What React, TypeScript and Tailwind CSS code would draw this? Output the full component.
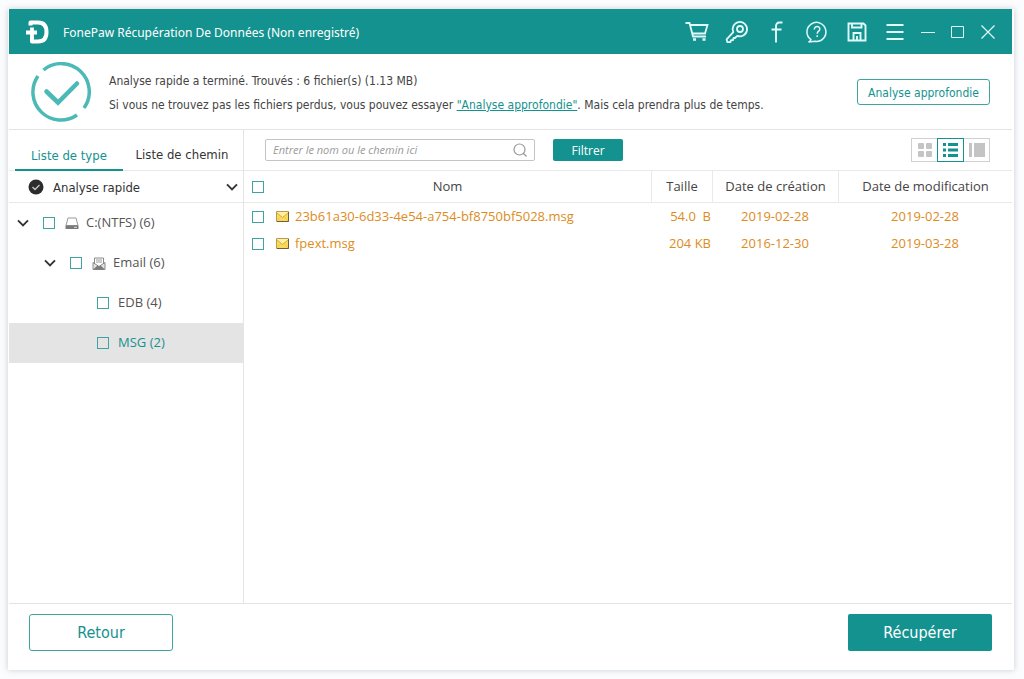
import type { ReactNode } from "react"

const TitleButton = ({
  label,
  className = "w-10",
  children,
}: {
  label: string
  className?: string
  children: ReactNode
}) => (
  <button
    type="button"
    aria-label={label}
    className={`flex h-10 items-center justify-center text-[#dffbfa] ${className}`}
  >
    {children}
  </button>
)

const Checkbox = ({ label }: { label: string }) => (
  <input
    type="checkbox"
    aria-label={label}
    className="block size-3 shrink-0 appearance-none border border-[#3fa3a0] checked:bg-[#149290]"
  />
)

const Chevron = ({ className = "" }: { className?: string }) => (
  <svg
    viewBox="0 0 12 8"
    className={`h-2 w-3 shrink-0 ${className}`}
    fill="none"
    stroke="#333"
    strokeWidth="1.9"
  >
    <path d="M1 1.3 6 6.3 11 1.3" />
  </svg>
)

const DriveIcon = () => (
  <svg viewBox="0 0 14 13" className="h-[13px] w-3.5 shrink-0">
    <path d="M3 1h8l2 7.500H1z" fill="#fff" stroke="#999" />
    <path d="M.5 8.500h13v3.500H.5z" fill="#7a7a7a" />
    <path d="M9 10.300h3" stroke="#ddd" />
  </svg>
)

const MailIcon = () => (
  <svg viewBox="0 0 14 13" className="h-[13px] w-3.5 shrink-0" fill="none">
    <path d="M2.500 6V1h9v5" stroke="#8a8a8a" />
    <path d="M4 3h6M4 5h6" stroke="#9a9a9a" />
    <path d="M1 5.500v7h12v-7L7 9.500z" fill="#e2e2e2" stroke="#888" />
    <path d="m1 12.500 4.500-4 1.500 1 1.500-1 4.500 4z" fill="#7a7a7a" />
  </svg>
)

const EnvelopeIcon = () => (
  <svg viewBox="0 0 13 11" className="h-[11px] w-[13px] shrink-0">
    <path d="M.5.5h12v10H.5z" fill="#fbd95b" stroke="#b89c55" />
    <path d="m1 10 4-4.500M12 10 8 5.500" stroke="#f0c95a" />
    <path d="m1 2 5.500 4.500L12 2V1H1z" fill="#fff0a8" />
    <path d="m1 2 5.500 4.500L12 2" fill="none" stroke="#d9a92e" />
    <path d="M12.500 1v9.500H1" fill="none" stroke="#6e5f3c" />
  </svg>
)

const tree = [
  { name: "C:(NTFS) (6)", indent: "pl-2", open: true, icon: <DriveIcon /> },
  { name: "Email (6)", indent: "pl-[35px]", open: true, icon: <MailIcon /> },
  { name: "EDB (4)", indent: "pl-[88px]" },
  { name: "MSG (2)", indent: "pl-[88px]", selected: true },
]

const files = [
  {
    name: "23b61a30-6d33-4e54-a754-bf8750bf5028.msg",
    size: "54.0\u00a0\u00a0B",
    created: "2019-02-28",
    modified: "2019-02-28",
  },
  {
    name: "fpext.msg",
    size: "204 KB",
    created: "2016-12-30",
    modified: "2019-03-28",
  },
]

const TitleBar = () => (
  <header className="flex h-[45px] items-center bg-[#149290] pr-[9px] pl-4 text-white">
    <svg viewBox="0 0 24 24" className="size-6 shrink-0" fill="none" stroke="#fff">
      <path
        d="M5.500 5.500V2.500H13C19 2.500 21.500 6.500 21.500 12S19 21.500 13 21.500H7V17"
        strokeWidth="4"
        strokeLinejoin="round"
      />
      <path d="M1 12.500h11M7 7.500v10" strokeWidth="3.800" />
    </svg>
    <h1 className="ml-3.5 flex-1 truncate pt-0.5 font-['Noto_Sans',sans-serif] text-xs">
      FonePaw Récupération De Données (Non enregistré)
    </h1>
    <TitleButton label="Acheter">
      <svg viewBox="0 0 24 22" className="h-[22px] w-6" fill="none" stroke="currentColor" strokeWidth="1.800">
        <path d="M.5 2h4l3.500 13.500h13M5 4h17.500l-2.500 8.500H7.500" />
        <path d="M8 18.500h3M17.500 18.500h3" strokeWidth="2.600" />
      </svg>
    </TitleButton>
    <TitleButton label="Enregistrer la licence">
      <svg viewBox="0 0 24 24" className="size-6" fill="none" stroke="currentColor" strokeWidth="1.800" strokeLinejoin="round">
        <path d="M8.300 12.200a7.200 7.200 0 1 1 4 3.700l-2.300 2.100-1.500-.2-.4 2.200-2 .1-.6 2H2.300l-.7-2.800z" />
        <circle cx="15" cy="9" r="3" />
      </svg>
    </TitleButton>
    <TitleButton label="Facebook">
      <svg viewBox="0 0 14 22" className="h-[22px] w-3.5" fill="none" stroke="currentColor" strokeWidth="1.900">
        <path d="M12.500 1.500H9.500C7 1.500 6 3 6 5.500V21.500M1.500 8.500h10" />
      </svg>
    </TitleButton>
    <TitleButton label="Aide">
      <svg viewBox="0 0 24 24" className="size-6" fill="none" stroke="currentColor" strokeWidth="1.500">
        <path d="M6 19.700A9.500 9.500 0 1 1 10 21.300L3.500 22c1.500-.7 2.300-1.400 2.500-2.300z" />
        <path d="M9.300 9.500c0-4 5.800-3.600 5.500-.3-.2 2-2.600 2-2.600 4.600M12.200 15.300v1.700" />
      </svg>
    </TitleButton>
    <TitleButton label="Sauvegarder">
      <svg viewBox="0 0 20 20" className="size-5" fill="none" stroke="currentColor" strokeWidth="1.900">
        <path d="M1.500 1.500h15l2 2v15h-17z" />
        <path d="M5 2v3.500h9.500V2M6.500 18v-7h7v7M10 14v4" />
      </svg>
    </TitleButton>
    <TitleButton label="Menu" className="w-9">
      <svg viewBox="0 0 18 18" className="size-[18px]" stroke="currentColor" strokeWidth="2">
        <path d="M.5 2h17M.5 9h17M.5 16h17" />
      </svg>
    </TitleButton>
    <TitleButton label="Réduire" className="w-[30px]">
      <svg viewBox="0 0 14 14" className="size-3.5" stroke="currentColor">
        <path d="M0 7.500h14" />
      </svg>
    </TitleButton>
    <TitleButton label="Agrandir" className="w-[30px]">
      <svg viewBox="0 0 14 12" className="h-3 w-3.5" fill="none" stroke="currentColor">
        <path d="M.5.5h12v11H.5z" />
      </svg>
    </TitleButton>
    <TitleButton label="Fermer" className="w-[30px]">
      <svg viewBox="0 0 14 14" className="size-3.5" stroke="currentColor" strokeWidth="1.200">
        <path d="m.5.5 13 13M13.500.5l-13 13" />
      </svg>
    </TitleButton>
  </header>
)

const Banner = () => (
  <section className="flex h-[76px] items-center border-b border-[#e4e4e4] pr-[22px] pl-[22px] font-['DejaVu_Sans_Condensed','Open_Sans',sans-serif]">
    <svg viewBox="0 0 60 60" className="size-[60px] shrink-0" fill="none" stroke="#4bbab7">
      <path d="M12.500 8A28 28 0 0 1 53 46M46 53A28 28 0 0 1 7 14" strokeWidth="3.500" />
      <path d="m15.500 29.500 11.500 11 19-19" strokeWidth="4.500" strokeLinecap="round" />
    </svg>
    <div className="ml-[18px] flex-1 pt-0.5 text-xs leading-6 text-[#444]">
      <p>Analyse rapide a terminé. Trouvés : 6 fichier(s) (1.13 MB)</p>
      <p>
        Si vous ne trouvez pas les fichiers perdus, vous pouvez essayer{" "}
        <a href="#approfondie" className="text-[#149290] underline">
          "Analyse approfondie"
        </a>
        . Mais cela prendra plus de temps.
      </p>
    </div>
    <button
      type="button"
      className="h-[26px] w-[133px] rounded-[3px] border border-[#3fa3a0] pt-0.5 text-xs text-[#149290]"
    >
      Analyse approfondie
    </button>
  </section>
)

const Sidebar = () => (
  <aside className="flex w-[235px] shrink-0 flex-col border-r border-[#e4e4e4]">
    <div
      role="tablist"
      className="flex h-[41px] border-b border-[#e9e9e9] pl-1.5 font-['DejaVu_Sans_Condensed','Open_Sans',sans-serif] text-[13px]"
    >
      <button
        type="button"
        role="tab"
        aria-selected="true"
        className="-mb-px w-[108px] border-b-2 border-[#149290] pt-3 text-[#149290]"
      >
        Liste de type
      </button>
      <button type="button" role="tab" aria-selected="false" className="w-[118px] pt-2.5 text-[#333]">
        Liste de chemin
      </button>
    </div>
    <div className="flex h-8 items-center border-b border-[#e9e9e9] pr-[5px] pl-[19px]">
      <svg viewBox="0 0 16 16" className="size-4 shrink-0" fill="none">
        <circle cx="8" cy="8" r="7.500" fill="#2c2c2c" />
        <path d="m4.500 8 2.500 2.500 4.500-4.500" stroke="#c9c9c9" strokeWidth="1.300" />
      </svg>
      <select
        aria-label="Mode d'analyse"
        className="-mr-3 ml-[9px] min-w-0 flex-1 appearance-none bg-transparent pt-0.5 font-['DejaVu_Sans_Condensed','Open_Sans',sans-serif] text-[13px] text-[#333]"
      >
        <option>Analyse rapide</option>
      </select>
      <Chevron className="pointer-events-none" />
    </div>
    <ul className="text-[13px] text-[#555]">
      {tree.map((node) => (
        <li
          key={node.name}
          className={`flex h-10 items-center ${node.indent} ${
            node.selected ? "bg-[#e4e4e4] text-[#149290]" : ""
          }`}
        >
          {node.open && (
            <button type="button" aria-label={`Réduire ${node.name}`} className="mr-3.5">
              <Chevron />
            </button>
          )}
          <Checkbox label={node.name} />
          {node.icon && <span className="-mr-0.5 ml-2.5">{node.icon}</span>}
          <span className="ml-[9px]">{node.name}</span>
        </li>
      ))}
    </ul>
  </aside>
)

const Toolbar = () => (
  <div className="flex h-[41px] shrink-0 items-center border-b border-[#e9e9e9] pr-[22px] pl-[21px]">
    <label className="flex h-[22px] w-[270px] items-center rounded-[2px] border border-[#c4c4c4] pr-[7px] pl-[7px]">
      <input
        type="text"
        aria-label="Rechercher"
        placeholder="Entrer le nom ou le chemin ici"
        className="min-w-0 flex-1 text-[11px] italic outline-none placeholder:text-[#999]"
      />
      <svg viewBox="0 0 14 14" className="size-3.5 shrink-0" fill="none" stroke="#999" strokeWidth="1.200">
        <circle cx="6.500" cy="6.500" r="5.500" />
        <path d="m10.500 10.500 3 3" />
      </svg>
    </label>
    <button type="button" className="ml-[18px] h-[22px] w-[70px] rounded-[2px] bg-[#149290] pt-0.5 text-xs text-white">
      Filtrer
    </button>
    <div className="ml-auto flex h-6">
      <button
        type="button"
        aria-label="Vignettes"
        className="flex w-[26px] items-center justify-center border border-r-0 border-[#d0d0d0]"
      >
        <svg viewBox="0 0 14 14" className="size-3.5" fill="#c4c4c4">
          <rect width="6" height="6" rx="1" />
          <rect x="8" width="6" height="6" rx="1" />
          <rect y="8" width="6" height="6" rx="1" />
          <rect x="8" y="8" width="6" height="6" rx="1" />
        </svg>
      </button>
      <button
        type="button"
        aria-label="Liste"
        className="flex w-[27px] items-center justify-center border border-[#149290]"
      >
        <svg viewBox="0 0 16 14" className="h-3.5 w-4" fill="#149290">
          <path d="M0 0h3v3H0zM5 0h10v3H5zM0 5.500h3v3H0zM5 5.500h10v3H5zM0 11h3v3H0zM5 11h10v3H5z" />
        </svg>
      </button>
      <button
        type="button"
        aria-label="Aperçu"
        className="flex w-[26px] items-center justify-center border border-l-0 border-[#d0d0d0]"
      >
        <svg viewBox="0 0 16 14" className="h-3.5 w-4" fill="#c4c4c4">
          <path d="M0 0h3v14H0zM5 0h11v14H5z" />
        </svg>
      </button>
    </div>
  </div>
)

const FileTable = () => (
  <table className="w-full table-fixed border-separate border-spacing-0 text-[13px]">
    <colgroup>
      <col className="w-7" />
      <col />
      <col className="w-[61px]" />
      <col className="w-[126px]" />
      <col className="w-[174px]" />
    </colgroup>
    <thead className="text-[#444]">
      <tr className="h-8">
        <th className="border-b border-[#e9e9e9] p-0 pl-2">
          <Checkbox label="Tout sélectionner" />
        </th>
        <th className="border-b border-[#e9e9e9] p-0 pr-7 font-normal">Nom</th>
        <th className="border-b border-l border-[#e9e9e9] p-0 font-normal">Taille</th>
        <th className="border-b border-l border-[#e9e9e9] p-0 font-normal">Date de création</th>
        <th className="border-b border-l border-[#e9e9e9] p-0 font-normal">Date de modification</th>
      </tr>
    </thead>
    <tbody className="text-[#dd8c1c]">
      {files.map((file) => (
        <tr key={file.name} className="h-[27px]">
          <td className="p-0 pl-2">
            <Checkbox label={file.name} />
          </td>
          <td className="p-0 pl-1">
            <div className="flex items-center gap-1.5">
              <EnvelopeIcon />
              <span className="truncate">{file.name}</span>
            </div>
          </td>
          <td className="p-0 pr-px text-right">{file.size}</td>
          <td className="p-0 text-center">{file.created}</td>
          <td className="p-0 text-center">{file.modified}</td>
        </tr>
      ))}
    </tbody>
  </table>
)

const App = () => {
  return (
    <div className="flex min-h-screen bg-[#fbfcfd] pt-[9px] pr-2.5 pb-[9px] pl-2 font-['Open_Sans','Noto_Sans',sans-serif]">
      <div className="flex min-w-0 flex-1 flex-col bg-white pr-0.5 pl-px shadow-[0_0_6px_rgba(80,95,120,0.3)]">
        <TitleBar />
        <Banner />
        <div className="flex flex-1">
          <Sidebar />
          <main className="min-w-0 flex-1">
            <Toolbar />
            <FileTable />
          </main>
        </div>
        <footer className="flex h-[67px] items-start justify-between border-t border-[#e4e4e4] px-5 pt-2.5 font-['DejaVu_Sans_Condensed','Open_Sans',sans-serif]">
          <button
            type="button"
            className="h-[37px] w-36 rounded-[3px] border border-[#3fa3a0] text-base text-[#149290]"
          >
            Retour
          </button>
          <button type="button" className="h-[37px] w-36 rounded-[2px] bg-[#149290] text-base text-white">
            Récupérer
          </button>
        </footer>
      </div>
    </div>
  )
}

export default App
